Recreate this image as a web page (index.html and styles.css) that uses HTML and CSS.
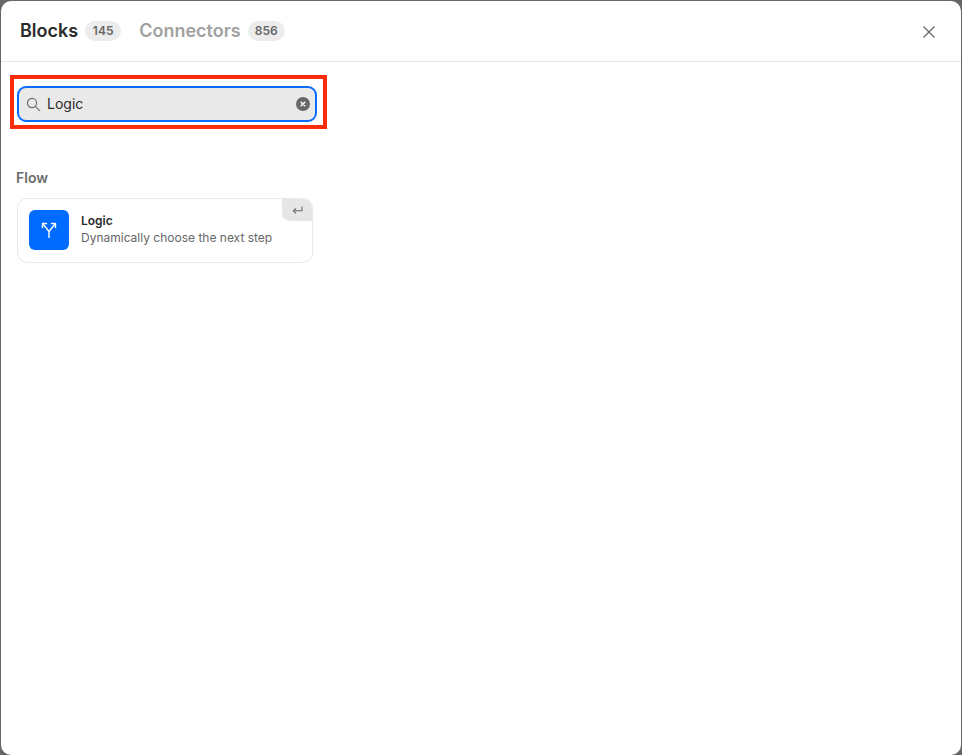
FILE: index.html
```html
<!DOCTYPE html>
<html lang="en">
<head>
<meta charset="utf-8">
<title>Blocks</title>
<link rel="stylesheet" href="styles.css">
</head>
<body>
<div class="modal">
  <header class="header">
    <div class="tabs">
      <div class="tab active"><span class="tab-name">Blocks</span><span class="count">145</span></div>
      <div class="tab"><span class="tab-name">Connectors</span><span class="count">856</span></div>
    </div>
    <svg class="close" width="14" height="14" viewBox="0 0 14 14" fill="none" stroke="#6b6b6b" stroke-width="1.4"><path d="M1.5 1.5l11 11M12.5 1.5l-11 11"/></svg>
  </header>
  <main class="content">
    <div class="search-wrap">
      <div class="highlight"></div>
      <div class="search">
        <svg class="search-icon" width="15" height="15" viewBox="0 0 15 15" fill="none" stroke="#6f6f6f" stroke-width="1.2"><circle cx="6" cy="6" r="4.6"/><path d="M9.4 9.4l4.2 4.2" stroke-linecap="round"/></svg>
        <span class="search-text">Logic</span>
        <svg class="clear" width="14" height="14" viewBox="0 0 14 14"><circle cx="7" cy="7" r="7" fill="#676767"/><path d="M5.2 5.2l3.6 3.6M8.8 5.2l-3.6 3.6" stroke="#fff" stroke-width="1.5" stroke-linecap="round"/></svg>
      </div>
    </div>
    <h2 class="section-title">Flow</h2>
    <div class="card">
      <div class="app-icon">
        <svg width="16" height="16" viewBox="0 0 16 16" fill="none" stroke="#fff" stroke-width="1.4" stroke-linecap="round" stroke-linejoin="round"><path d="M8 15.5V9.5L2 2M8 9.5L14 2"/><path d="M1.5 5.5V1.5h4M14.5 5.5V1.5h-4"/></svg>
      </div>
      <div class="card-text">
        <div class="card-title">Logic</div>
        <div class="card-desc">Dynamically choose the next step</div>
      </div>
      <div class="enter-key">
        <svg width="11" height="9" viewBox="0 0 11 9" fill="none" stroke="#6a6a6a" stroke-width="1.1"><path d="M10 .5v4.3H1.5"/><path d="M4 2.3L1.4 4.8 4 7.3"/></svg>
      </div>
    </div>
  </main>
</div>
</body>
</html>
```
FILE: styles.css
```css
* { box-sizing: border-box; }
html, body { height: 100%; }
body {
  margin: 0;
  padding: 1px 1px 0 1px;
  background: #666666;
  font-family: Inter, "Liberation Sans", sans-serif;
  overflow: hidden;
}
.modal {
  height: 754px;
  background: #ffffff;
  border-radius: 10px;
  overflow: hidden;
}
.header {
  height: 61px;
  border-bottom: 1px solid #e6e6e6;
  display: flex;
  align-items: center;
  justify-content: space-between;
  padding: 0 25px 0 19px;
}
.tabs { display: flex; align-items: center; gap: 18px; }
.tab { display: flex; align-items: center; gap: 7px; }
.tab-name { font-size: 18px; font-weight: 600; line-height: 22px; color: #a1a1a1; }
.tab.active .tab-name { color: #2b2b2b; }
.count {
  height: 20px;
  min-width: 36px;
  padding: 0 7px;
  border-radius: 10px;
  background: #ececec;
  color: #666666;
  font-size: 12px;
  font-weight: 600;
  line-height: 20px;
  text-align: center;
}
.close { flex: none; margin-top: 2px; }
.content { padding: 24px 16px 0; }
.search-wrap { position: relative; width: 300px; height: 36px; }
.highlight {
  position: absolute;
  left: -7px;
  top: -11px;
  width: 317px;
  height: 54px;
  border: 4px solid #fb2c0a;
}
.search {
  position: relative;
  height: 36px;
  display: flex;
  align-items: center;
  padding: 0 5px 0 7px;
  background: #e9e9e9;
  border: 2px solid #0a6cff;
  border-radius: 9px;
}
.search-icon { flex: none; }
.search-text { flex: 1; margin-left: 6px; font-size: 14px; line-height: 20px; color: #2b2b2b; }
.clear { flex: none; }
.section-title {
  margin: 47px 0 0 -1px;
  font-size: 14px;
  font-weight: 600;
  line-height: 17px;
  color: #6b6b6b;
}
.card {
  position: relative;
  width: 296px;
  height: 65px;
  margin: 12px 0 0;
  display: flex;
  align-items: center;
  gap: 12px;
  padding: 0 11px 2px;
  border: 1px solid #e9e9e9;
  border-radius: 10px;
  overflow: hidden;
}
.app-icon {
  flex: none;
  width: 40px;
  height: 40px;
  border-radius: 6px;
  background: #006bff;
  display: flex;
  align-items: center;
  justify-content: center;
}
.card-text { margin-top: -2px; }
.card-title { font-size: 12px; font-weight: 600; line-height: 17px; color: #2b2b2b; }
.card-desc { font-size: 12px; line-height: 17px; color: #666666; }
.enter-key {
  position: absolute;
  top: 0;
  right: 0;
  width: 30px;
  height: 22px;
  background: #e6e6e6;
  border-bottom-left-radius: 8px;
  display: flex;
  align-items: center;
  justify-content: center;
}
```
